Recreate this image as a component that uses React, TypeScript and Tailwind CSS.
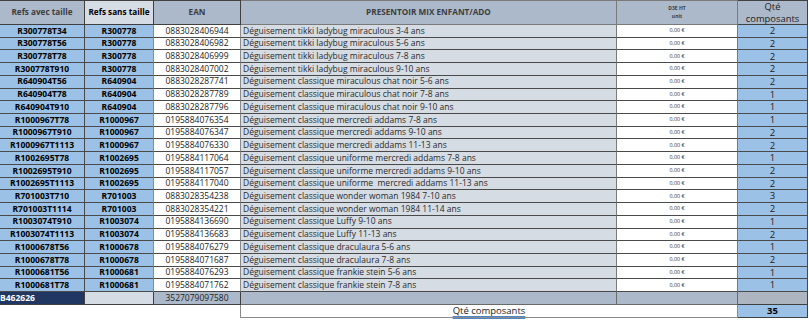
import React from 'react';

type Row = [string, string, string, string, number];

const rows: Row[] = [
  ['R300778T34', 'R300778', '0883028406944', 'Déguisement tikki ladybug miraculous 3-4 ans', 2],
  ['R300778T56', 'R300778', '0883028406982', 'Déguisement tikki ladybug miraculous 5-6 ans', 2],
  ['R300778T78', 'R300778', '0883028406999', 'Déguisement tikki ladybug miraculous 7-8 ans', 2],
  ['R300778T910', 'R300778', '0883028407002', 'Déguisement tikki ladybug miraculous 9-10 ans', 2],
  ['R640904T56', 'R640904', '0883028287741', 'Déguisement classique miraculous chat noir 5-6 ans', 2],
  ['R640904T78', 'R640904', '0883028287789', 'Déguisement classique miraculous chat noir 7-8 ans', 1],
  ['R640904T910', 'R640904', '0883028287796', 'Déguisement classique miraculous chat noir 9-10 ans', 1],
  ['R1000967T78', 'R1000967', '0195884076354', 'Déguisement classique mercredi addams 7-8 ans', 1],
  ['R1000967T910', 'R1000967', '0195884076347', 'Déguisement classique mercredi addams 9-10 ans', 2],
  ['R1000967T1113', 'R1000967', '0195884076330', 'Déguisement classique mercredi addams 11-13 ans', 2],
  ['R1002695T78', 'R1002695', '0195884117064', 'Déguisement classique uniforme mercredi addams 7-8 ans', 1],
  ['R1002695T910', 'R1002695', '0195884117057', 'Déguisement classique uniforme mercredi addams 9-10 ans', 2],
  ['R1002695T1113', 'R1002695', '0195884117040', 'Déguisement classique uniforme\u00a0 mercredi addams 11-13 ans', 2],
  ['R701003T710', 'R701003', '0883028354238', 'Déguisement classique wonder woman 1984 7-10 ans', 3],
  ['R701003T1114', 'R701003', '0883028354221', 'Déguisement classique wonder woman 1984 11-14 ans', 2],
  ['R1003074T910', 'R1003074', '0195884136690', 'Déguisement classique Luffy 9-10 ans', 1],
  ['R1003074T1113', 'R1003074', '0195884136683', 'Déguisement classique Luffy 11-13 ans', 2],
  ['R1000678T56', 'R1000678', '0195884076279', 'Déguisement classique draculaura 5-6 ans', 1],
  ['R1000678T78', 'R1000678', '0195884071687', 'Déguisement classique draculaura 7-8 ans', 2],
  ['R1000681T56', 'R1000681', '0195884076293', 'Déguisement classique frankie stein 5-6 ans', 1],
  ['R1000681T78', 'R1000681', '0195884071762', 'Déguisement classique frankie stein 7-8 ans', 1],
];

// description, avec le soulignement du correcteur sur "addams" (ligne 10)
const Desc = ({ text, i }: { text: string; i: number }) => {
  if (i === 9) {
    return (
      <span>
        Déguisement classique mercredi{' '}
        <span className="underline decoration-wavy decoration-[#e02020] decoration-1 underline-offset-2">addams</span> 11-13 ans
      </span>
    );
  }
  return <span>{text}</span>;
};

export default function App() {
  const cell = 'h-[12.72px] border-b border-r border-[#4a4a4a] flex items-center text-[8.5px] leading-none overflow-hidden whitespace-pre';
  const head = 'h-[25px] border-y border-r bg-[#acb9ca] flex items-center justify-center text-[8.2px] font-bold text-[#3d3d3d]';

  return (
    <div className="w-[809px] h-[323px] bg-white overflow-hidden font-['Open_Sans',sans-serif] text-[#222]">
      <div className="grid grid-cols-[85px_69px_87px_376px_121px_70px] w-[808px]">
        {/* HEADER */}
        <div className={`${head} border-[#404040]`}>Refs avec taille</div>
        <div className={`${head} border-[#404040] !bg-[#d6dce4] !text-black`}>Refs sans taille</div>
        <div className={`${head} border-[#404040]`}>EAN</div>
        <div className={`${head} border-[#7a7a7a]`}>PRESENTOIR MIX ENFANT/ADO</div>
        <div className="h-[25px] border-y border-r border-[#7a7a7a] bg-[#acb9ca] flex flex-col items-center justify-center gap-[3px] text-[5px] font-bold text-[#3d3d3d] leading-none">
          <span>D3E HT</span>
          <span>unit</span>
        </div>
        <div className="h-[25px] border-y border-r border-[#404040] bg-[#acb9ca] flex flex-col items-center justify-center text-[9.4px] text-[#222] leading-[12px]">
          <span>Qté</span>
          <span>composants</span>
        </div>

        {/* LIGNES */}
        {rows.map((r, i) => (
          <React.Fragment key={r[0]}>
            <div className={`${cell} bg-[#9bc2e6] justify-center font-bold text-black`}>{r[0]}</div>
            <div className={`${cell} bg-[#9bc2e6] justify-center font-bold text-black border-r-[#8a8a8a]`}>{r[1]}</div>
            <div className={`${cell} bg-white justify-center border-r-[#8a8a8a]`}>{r[2]}</div>
            <div className={`${cell} bg-[#d6dce4] pl-[2px] border-r-[#7a7a7a] text-[#2a2a2a]`}>
              <Desc text={r[3]} i={i} />
            </div>
            <div className={`${cell} bg-white justify-center !text-[5.4px] text-[#333] border-r-[#7a7a7a]`}>0,00 €</div>
            <div className={`${cell} bg-[#9bc2e6] justify-center !text-[9.5px]`}>{r[4]}</div>
          </React.Fragment>
        ))}

        {/* TOTAL */}
        <div className="h-[13px] border-b border-r border-[#404040] bg-[#203764] flex items-center text-[8.5px] font-bold text-white leading-none">B462626</div>
        <div className="h-[13px] border-b border-r border-[#404040] bg-[#d6dce4]"></div>
        <div className="h-[13px] border-b border-r border-[#404040] bg-[#acb9ca] flex items-center justify-center text-[8.5px] leading-none">3527079097580</div>
        <div className="h-[13px] border-b border-r border-[#6a6a6a] bg-[#acb9ca]"></div>
        <div className="h-[13px] border-b border-r border-[#6a6a6a] bg-[#acb9ca]"></div>
        <div className="h-[13px] border-b border-r border-[#404040] bg-[#adb5c0]"></div>

        <div className="col-span-3 h-[13px] border-r border-[#8a8a8a]"></div>
        <div className="col-span-2 h-[13px] border-b border-r border-[#8a8a8a] bg-white flex items-center justify-center text-[9.5px] leading-none">
          <span className="underline decoration-double decoration-[#4f86c6] underline-offset-2">Qté composants</span>
        </div>
        <div className="h-[13px] border-b border-r border-[#404040] bg-[#9bc2e6] flex items-center justify-center text-[9.5px] font-bold leading-none text-black">35</div>
      </div>
    </div>
  );
}
